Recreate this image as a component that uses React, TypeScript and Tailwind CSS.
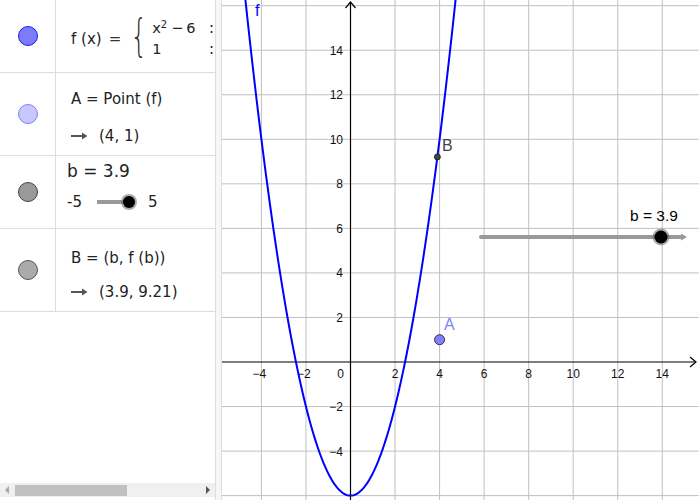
import React from "react";

const OX = 351.5;
const OY = 362;
const S = 22.27;
const X = (v: number) => OX + v * S;
const Y = (v: number) => OY - v * S;

function Graph() {
  const verts: number[] = [];
  for (let k = -6; k <= 16; k += 2) if (k !== 0) verts.push(k);
  const horiz: number[] = [];
  for (let k = -6; k <= 18; k += 2) if (k !== 0) horiz.push(k);
  const pts: string[] = [];
  for (let x = -4.9; x <= 4.9001; x += 0.05) {
    pts.push(`${X(x).toFixed(2)},${Y(x * x - 6).toFixed(2)}`);
  }
  const xl = [-4, -2, 2, 4, 6, 8, 10, 12, 14];
  const yl = [-4, -2, 2, 4, 6, 8, 10, 12, 14];
  const lab = (n: number) => (n < 0 ? `\u2212${-n}` : `${n}`);
  const font = { fontFamily: "'Liberation Sans', Arial, sans-serif" };
  return (
    <svg width="477" height="500" viewBox="223 0 477 500" className="block">
      <rect x="223" y="0" width="477" height="500" fill="#ffffff" />
      {verts.map((k) => (
        <line key={"v" + k} x1={X(k)} y1={0} x2={X(k)} y2={500} stroke="#c0c0c0" strokeWidth="1" />
      ))}
      {horiz.map((k) => (
        <line key={"h" + k} x1={223} y1={Y(k)} x2={700} y2={Y(k)} stroke="#c0c0c0" strokeWidth="1" />
      ))}
      {/* axes */}
      <line x1={223} y1={OY} x2={697} y2={OY} stroke="#000" strokeWidth="1.2" />
      <polyline points={`${691},${OY - 5} ${697},${OY} ${691},${OY + 5}`} fill="none" stroke="#000" strokeWidth="1.2" />
      <line x1={OX} y1={2} x2={OX} y2={500} stroke="#000" strokeWidth="1.2" />
      <polyline points={`${OX - 5},${8} ${OX},${2} ${OX + 5},${8}`} fill="none" stroke="#000" strokeWidth="1.2" />
      {/* labels */}
      {xl.map((k) => (
        <text key={"xl" + k} x={X(k) - (k < 0 ? 2 : 0)} y={378} textAnchor="middle" fontSize="12" fill="#111" style={font}>
          {lab(k)}
        </text>
      ))}
      <text x={345} y={378} textAnchor="end" fontSize="12" fill="#111" style={font}>
        0
      </text>
      {yl.map((k) => (
        <text key={"yl" + k} x={344} y={Y(k) + 4.5} textAnchor="end" fontSize="12" fill="#111" style={font}>
          {lab(k)}
        </text>
      ))}
      {/* curve */}
      <polyline points={pts.join(" ")} fill="none" stroke="#0000ff" strokeWidth="2" />
      <text x={256} y={16} fontSize="16" fill="#0000ff" style={font}>
        f
      </text>
      {/* point B */}
      <circle cx={X(3.9)} cy={Y(9.21)} r={3} fill="#444" stroke="#111" strokeWidth="0.8" />
      <text x={443} y={151} fontSize="16" fill="#444" style={font}>
        B
      </text>
      {/* point A */}
      <circle cx={X(4)} cy={Y(1)} r={5} fill="#7f7fff" stroke="#333" strokeWidth="1" />
      <text x={445} y={330} fontSize="16" fill="#8080ff" style={font}>
        A
      </text>
      {/* slider */}
      <line x1={482} y1={237} x2={683} y2={237} stroke="#999" strokeWidth="4" strokeLinecap="round" />
      <polygon points="682,233.5 688,237 682,240.5" fill="#999" />
      <circle cx={662} cy={237} r={8.5} fill="#666" opacity="0.55" />
      <circle cx={662} cy={237} r={6.5} fill="#000" />
      <text x={631} y={221} fontSize="15.5" fill="#000" style={font}>
        b = 3.9
      </text>
    </svg>
  );
}

function Dot({ fill, stroke }: { fill: string; stroke: string }) {
  return (
    <div className="w-[56px] shrink-0 border-r border-[#dddddd] flex items-center justify-center">
      <div className="w-[20px] h-[20px] rounded-full border" style={{ backgroundColor: fill, borderColor: stroke }} />
    </div>
  );
}

function Arrow() {
  return (
    <svg width="17" height="10" viewBox="0 0 17 10" className="inline-block align-middle">
      <line x1="0" y1="5" x2="13" y2="5" stroke="#555" strokeWidth="2" />
      <polygon points="11,1.5 16.5,5 11,8.5" fill="#555" />
    </svg>
  );
}

export default function App() {
  return (
    <div
      className="w-[700px] h-[500px] flex bg-white overflow-hidden text-[#222]"
      style={{ fontFamily: "'DejaVu Sans', 'Liberation Sans', sans-serif" }}
    >
      <div className="w-[216px] shrink-0 flex flex-col border-r border-[#dddddd] relative">
        {/* row 1 */}
        <div className="h-[73px] flex border-b border-[#dddddd]">
          <Dot fill="#7c7cf8" stroke="#1a1aff" />
          <div className="flex-1 flex items-center pl-[15px] pt-[6px] text-[15px] whitespace-nowrap">
            <span>f (x)</span>
            <span className="ml-[7px] text-[#333]">=</span>
            <span className="ml-[12px] text-[44px] leading-none font-extralight text-[#333] scale-x-[0.6] -translate-y-[3px] w-[12px] flex justify-center">
              {"{"}
            </span>
            <div className="flex flex-col ml-[7px] leading-[21px] text-[14.5px]">
              <span>
                x<sup className="text-[10px]">2</sup>
                <span className="ml-[4px]">−</span>
                <span className="ml-[3px]">6</span>
              </span>
              <span>1</span>
            </div>
            <div className="flex flex-col ml-auto mr-[1px] leading-[21px]">
              <span>:</span>
              <span>:</span>
            </div>
          </div>
        </div>
        {/* row 2 */}
        <div className="h-[83px] flex border-b border-[#dddddd]">
          <Dot fill="#c8c8ff" stroke="#7f7fff" />
          <div className="flex flex-col pl-[15px] pt-[16px] text-[15px] leading-[20px] whitespace-nowrap">
            <span>A = Point (f)</span>
            <span className="mt-[17px] flex items-center">
              <Arrow />
              <span className="ml-[11px]">(4, 1)</span>
            </span>
          </div>
        </div>
        {/* row 3 */}
        <div className="h-[73px] flex border-b border-[#dddddd]">
          <Dot fill="#999999" stroke="#444444" />
          <div className="flex flex-col pl-[11px] pt-[4px] whitespace-nowrap">
            <span className="text-[17px] leading-[22px]">b = 3.9</span>
            <div className="flex items-center mt-[10px] h-[20px] text-[15px]">
              <span>-5</span>
              <div className="relative ml-[15px] w-[40px] h-[20px]">
                <div className="absolute left-0 top-[8px] w-[33px] h-[4px] bg-[#999]" />
                <div className="absolute left-[24px] top-[2px] w-[16px] h-[16px] rounded-full bg-[#666] opacity-55" />
                <div className="absolute left-[26px] top-[4px] w-[12px] h-[12px] rounded-full bg-black" />
              </div>
              <span className="ml-[11px]">5</span>
            </div>
          </div>
        </div>
        {/* row 4 */}
        <div className="h-[83px] flex border-b border-[#dddddd]">
          <Dot fill="#aaaaaa" stroke="#555555" />
          <div className="flex flex-col pl-[15px] pt-[19px] text-[15px] leading-[20px] whitespace-nowrap">
            <span>B = (b, f (b))</span>
            <span className="mt-[14px] flex items-center">
              <Arrow />
              <span className="ml-[11px]">(3.9, 9.21)</span>
            </span>
          </div>
        </div>
        <div className="flex-1" />
        {/* scrollbar */}
        <div className="h-[14px] mb-[3px] bg-[#f0f0f0] flex items-center relative">
          <div className="ml-[5px] w-0 h-0 border-y-[4px] border-y-transparent border-r-[4px] border-r-[#a8a8a8]" />
          <div className="ml-[6px] w-[112px] h-[11px] bg-[#c0c0c0]" />
          <div className="flex-1" />
          <div className="mr-[5px] w-0 h-0 border-y-[4px] border-y-transparent border-l-[4px] border-l-[#555]" />
        </div>
      </div>
      <div className="w-[6px] shrink-0 bg-[#f7f7f7] border-r border-[#dddddd]" />
      <div className="flex-1">
        <Graph />
      </div>
    </div>
  );
}
